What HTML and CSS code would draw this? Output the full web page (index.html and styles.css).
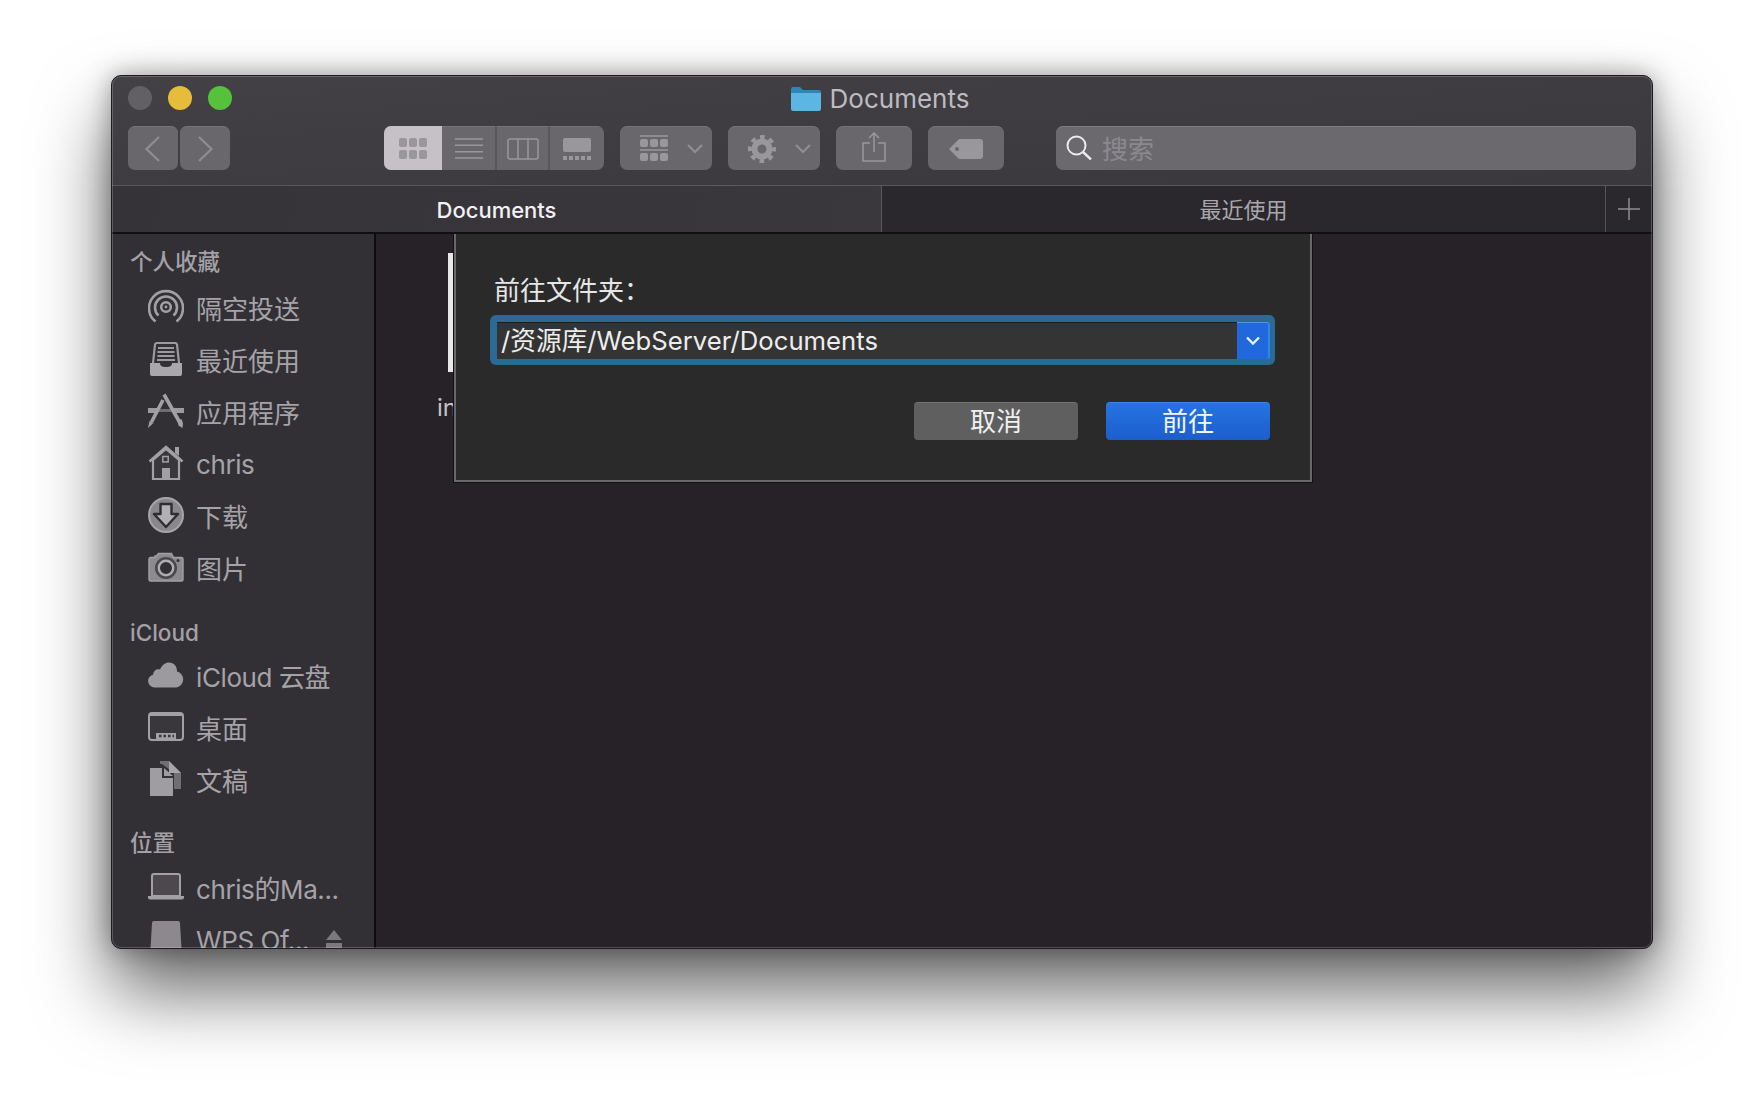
FILE: index.html

```html
<!DOCTYPE html>
<html lang="zh-CN">
<head>
  <meta charset="UTF-8">
  <title>Documents</title>
  <link rel="stylesheet" href="styles.css">
</head>
<body>
  <div class="window">
    <div class="chrome">
      <div class="titlebar">
        <div class="lights">
          <span class="light light-off"></span>
          <span class="light light-min"></span>
          <span class="light light-max"></span>
        </div>
        <div class="title">
          <svg class="folder" viewBox="0 0 30 24"><path fill="#2f86b5" d="M0 2a2 2 0 0 1 2-2h7l3 3h16a2 2 0 0 1 2 2v4H0z"/><path fill="#5cb6e2" d="M0 6h30v16a2 2 0 0 1-2 2H2a2 2 0 0 1-2-2z"/></svg>
          <span>Documents</span>
        </div>
      </div>

      <div class="toolbar">
        <div class="btn-pair">
          <div class="tool nav-btn"><svg width="20" height="30" viewBox="0 0 20 30"><path class="ico-line" d="M16 3 3.500 15 16 27"/></svg></div>
          <div class="tool nav-btn"><svg width="20" height="30" viewBox="0 0 20 30"><path class="ico-line" d="M4 3l12.500 12L4 27"/></svg></div>
        </div>

        <div class="view-group">
          <div class="view-btn view-active">
            <svg width="28" height="21" viewBox="0 0 28 21"><g fill="#9a979c"><rect width="8" height="9" rx="2"/><rect x="10" width="8" height="9" rx="2"/><rect x="20" width="8" height="9" rx="2"/><rect y="12" width="8" height="9" rx="2"/><rect x="10" y="12" width="8" height="9" rx="2"/><rect x="20" y="12" width="8" height="9" rx="2"/></g></svg>
          </div>
          <div class="view-btn view-list">
            <svg width="28" height="21" viewBox="0 0 28 21"><path stroke="#9a979c" stroke-width="1.600" d="M0 1h28M0 7.300h28M0 13.700h28M0 20h28"/></svg>
          </div>
          <div class="view-btn view-cols">
            <svg width="32" height="22" viewBox="0 0 32 22"><rect x="1" y="1" width="30" height="20" rx="2" fill="none" stroke="#9a979c" stroke-width="1.500"/><path stroke="#9a979c" stroke-width="1.500" d="M11 1v20M21 1v20"/></svg>
          </div>
          <div class="view-btn view-gallery">
            <svg width="28" height="22" viewBox="0 0 28 22"><rect width="28" height="14" rx="2" fill="#9a979c"/><g fill="#9a979c"><rect y="18" width="4" height="4"/><rect x="6" y="18" width="4" height="4"/><rect x="12" y="18" width="4" height="4"/><rect x="18" y="18" width="4" height="4"/><rect x="24" y="18" width="4" height="4"/></g></svg>
          </div>
        </div>

        <div class="tool menu-btn arrange">
          <svg width="28" height="27" viewBox="0 0 28 27"><path stroke="#9a979c" stroke-width="1.500" d="M0 1h28M0 15h28"/><g fill="#9a979c"><rect y="4" width="8" height="8" rx="2"/><rect x="10" y="4" width="8" height="8" rx="2"/><rect x="20" y="4" width="8" height="8" rx="2"/><rect y="18" width="8" height="8" rx="2"/><rect x="10" y="18" width="8" height="8" rx="2"/><rect x="20" y="18" width="8" height="8" rx="2"/></g></svg>
          <svg class="chev" width="16" height="10" viewBox="0 0 16 10"><path class="ico-line" d="M1 1l7 7 7-7"/></svg>
        </div>

        <div class="tool menu-btn action">
          <svg width="28" height="28" viewBox="0 0 28 28"><g fill="none" stroke="#9a979c"><circle cx="14" cy="14" r="7.500" stroke-width="6"/><circle cx="14" cy="14" r="12" stroke-width="4" stroke-dasharray="4.712 4.712" stroke-dashoffset="2.356"/></g></svg>
          <svg class="chev" width="16" height="10" viewBox="0 0 16 10"><path class="ico-line" d="M1 1l7 7 7-7"/></svg>
        </div>

        <div class="tool icon-btn share">
          <svg width="24" height="30" viewBox="0 0 24 30"><path fill="none" stroke="#9a979c" stroke-width="1.500" d="M8 11H1v18h22V11h-7"/><path fill="none" stroke="#9a979c" stroke-width="1.500" d="M12 20V1.500M7 6l5-5 5 5"/></svg>
        </div>

        <div class="tool icon-btn tag">
          <svg width="34" height="20" viewBox="0 0 34 20"><path fill="#9a979c" fill-rule="evenodd" d="M10 0h21a3 3 0 0 1 3 3v14a3 3 0 0 1-3 3H10L0 10zM8 8a2 2 0 1 0 0 4 2 2 0 0 0 0-4z"/></svg>
        </div>

        <div class="search">
          <svg width="26" height="25" viewBox="0 0 26 25"><circle cx="10.500" cy="10.500" r="9" fill="none" stroke="#eceaee" stroke-width="2"/><path stroke="#eceaee" stroke-width="2.400" d="M17 17l8 7.500"/></svg>
          <span>搜索</span>
        </div>
      </div>
    </div>

    <div class="tabs">
      <div class="tab tab-active">Documents</div>
      <div class="tab">最近使用</div>
      <div class="tab-add"><svg width="22" height="22" viewBox="0 0 22 22"><path stroke="#8f8d92" stroke-width="1.500" d="M11 0v22M0 11h22"/></svg></div>
    </div>

    <div class="main">
      <aside class="sidebar">
        <div class="side-title first">个人收藏</div>
        <div class="side-item">
          <svg class="side-ico" viewBox="0 0 36 36"><g fill="none" stroke="#a3a0a5" stroke-width="2.600"><path d="M7.500 32.500A17 17 0 1 1 28.500 32.500"/><path d="M10.500 26.500A11 11 0 1 1 25.500 26.500"/><circle cx="18" cy="18" r="4.800"/></g><circle cx="18" cy="18" r="1.400" fill="#a3a0a5"/></svg>
          <span>隔空投送</span>
        </div>
        <div class="side-item">
          <svg class="side-ico" viewBox="0 0 36 36"><path fill="none" stroke="#9d9a9f" stroke-width="2.200" d="M5 22 7 3.500a2 2 0 0 1 2-1.500h18a2 2 0 0 1 2 1.500L31 22"/><path stroke="#9d9a9f" stroke-width="2" d="M10 7h16M9.500 11h17M9.500 15h17M9 19h18"/><path fill="#aaa7ac" d="M2 22h10c0 3 2 4 6 4s6-1 6-4h10v11a2 2 0 0 1-2 2H4a2 2 0 0 1-2-2z"/></svg>
          <span>最近使用</span>
        </div>
        <div class="side-item">
          <svg class="side-ico" viewBox="0 0 36 36"><path fill="#9d9a9f" d="M0 15h11l-2.500 5H0zM24.500 15H36v5h-9z"/><path fill="#6f6c71" d="M12 16h11l1.500 3h-14z"/><path fill="none" stroke="#a3a0a5" stroke-width="3.600" d="M15 7 3.500 29M16 1.500 31.500 29"/><path fill="#a3a0a5" d="M1.500 28l4 2-5.500 5zM29.500 28l4-2 1.500 4.500-.500 4.500-4-2.500z"/></svg>
          <span>应用程序</span>
        </div>
        <div class="side-item side-latin side-low">
          <svg class="side-ico" viewBox="0 0 36 36"><path fill="none" stroke="#a3a0a5" stroke-width="2.600" d="M1.500 16.500 18 2l16.500 14.500"/><path fill="#a3a0a5" d="M27 2h4v9l-4-3z"/><path fill="#3a373c" stroke="#a3a0a5" stroke-width="2.200" d="M5 15v19h26V15L18 4z"/><rect x="14.800" y="11.500" width="5.400" height="5.400" fill="none" stroke="#a3a0a5" stroke-width="1.500"/><path fill="#a3a0a5" d="M14 23h8v11h-8z"/></svg>
          <span>chris</span>
        </div>
        <div class="side-item">
          <svg class="side-ico" viewBox="0 0 36 36"><circle cx="18" cy="18" r="17" fill="#8a878c" stroke="#a8a5aa" stroke-width="2"/><path fill="#b3b0b5" stroke="#2f2d32" stroke-width="2.400" stroke-linejoin="round" d="M12.500 7h11v10H30L18 30 6 17h6.500z"/></svg>
          <span>下载</span>
        </div>
        <div class="side-item">
          <svg class="side-ico" viewBox="0 0 36 36"><path fill="#8d8a8f" stroke="#a3a0a5" stroke-width="1.400" d="M1 10a1.500 1.500 0 0 1 1.500-1.500H7V7h1.500l2-2.500h13l2 4H33.500A1.500 1.500 0 0 1 35 10v20.500a1.500 1.500 0 0 1-1.500 1.500h-31A1.500 1.500 0 0 1 1 30.500z"/><circle cx="18" cy="19" r="11" fill="#4a474c"/><circle cx="18" cy="19" r="7.200" fill="#323035" stroke="#b0adb2" stroke-width="2.400"/><circle cx="30" cy="11.500" r="1.500" fill="#323035"/></svg>
          <span>图片</span>
        </div>

        <div class="side-title title-low">iCloud</div>
        <div class="side-item side-latin">
          <svg class="side-ico" viewBox="0 0 36 36"><path fill="#9d9a9f" d="M6.500 30.500a6.500 6.500 0 0 1-1.500-12.800C5.500 13.500 8.500 11.500 12 12.500 14 8 17.500 5.500 21 5.500c5 0 8.200 4 8 9A8.200 8.200 0 0 1 28.500 30.500z"/></svg>
          <span>iCloud 云盘</span>
        </div>
        <div class="side-item">
          <svg class="side-ico" viewBox="0 0 36 36"><rect x="1" y="4" width="34" height="27" rx="3" fill="#3a373c" stroke="#a3a0a5" stroke-width="2"/><path fill="#a3a0a5" d="M2 4h32v3H2z"/><rect x="8" y="24" width="20" height="6" fill="#a3a0a5"/><path stroke="#3a373c" stroke-width="2.500" stroke-dasharray="2.500 2" d="M11 27h15"/></svg>
          <span>桌面</span>
        </div>
        <div class="side-item">
          <svg class="side-ico" viewBox="0 0 36 36"><path fill="#716e73" d="M12 0h9l12 12v16h-7V12L14 3H12z"/><path fill="#a8a5aa" d="M21 0l12 12H21z"/><path fill="#a09da2" d="M2 7h12v10h11v18H2z"/><path fill="#a09da2" d="M16 7l9 8h-9z"/></svg>
          <span>文稿</span>
        </div>

        <div class="side-title">位置</div>
        <div class="side-item side-latin">
          <svg class="side-ico" viewBox="0 0 36 36"><path fill="#4c484e" stroke="#a3a0a5" stroke-width="2" d="M4 27V7a2 2 0 0 1 2-2h24a2 2 0 0 1 2 2v20z"/><path fill="#a3a0a5" d="M0 27h36v1.500a2 2 0 0 1-2 2H2a2 2 0 0 1-2-2z"/></svg>
          <span>chris的Ma...</span>
        </div>
        <div class="side-item side-latin side-low">
          <svg class="side-ico" viewBox="0 0 36 36"><path fill="#8c888e" d="M6 0h24a2 2 0 0 1 2 2l2 34H2L4 2a2 2 0 0 1 2-2z"/></svg>
          <span class="side-name">WPS Of...</span>
          <svg class="eject" width="16" height="18" viewBox="0 0 16 18"><path fill="#7c797e" d="M8 0l8 10H0zM0 13h16v5H0z"/></svg>
        </div>
      </aside>

      <section class="content">
        <div class="file">
          <div class="file-page"></div>
          <div class="file-name">index.html</div>
        </div>

        <div class="sheet">
          <div class="sheet-label">前往文件夹：</div>
          <div class="combo">
            <div class="combo-field">/资源库/WebServer/Documents</div>
            <div class="combo-arrow"><svg width="14" height="10" viewBox="0 0 14 10"><path fill="none" stroke="#e8f0fc" stroke-width="2.400" d="M1 1.500l6 6 6-6"/></svg></div>
          </div>
          <div class="sheet-actions">
            <div class="sheet-btn btn-cancel">取消</div>
            <div class="sheet-btn btn-go">前往</div>
          </div>
        </div>
      </section>
    </div>
  </div>
</body>
</html>
```

FILE: styles.css

```css
* {
  box-sizing: border-box;
}

html, body {
  height: 100%;
}

body {
  margin: 0;
  padding: 75px 0 0 111px;
  background-color: #fff;
  overflow: hidden;
  font-family: "Inter", "Noto Sans CJK SC", sans-serif;
}

.window {
  position: relative;
  width: 1542px;
  height: 874px;
  display: flex;
  flex-direction: column;
  border: 1px solid #1c1b1d;
  border-radius: 10px;
  overflow: hidden;
  background: #3a383c;
  box-shadow: 0 42px 75px rgba(0, 0, 0, 0.6), 0 0 26px rgba(0, 0, 0, 0.35);
}

/* light inner rim, sits over everything */
.window::after {
  content: "";
  position: absolute;
  inset: 0;
  border: 1px solid rgba(255, 255, 255, 0.2);
  border-radius: 9px;
  pointer-events: none;
}

.chrome {
  flex: none;
  background: linear-gradient(176deg, #434046, #3a383c);
}

.titlebar {
  height: 50px;
  display: grid;
  grid-template-columns: 1fr auto 1fr;
  align-items: start;
  padding: 10px 16px 0;
}

.lights {
  display: flex;
  gap: 16px;
}

.light {
  width: 24px;
  height: 24px;
  border-radius: 50%;
}

.light-off { background-color: #626064; }
.light-min { background-color: #e6bd3a; }
.light-max { background-color: #56c13a; }

.title {
  display: flex;
  align-items: center;
  gap: 9px;
  color: #bdbbc0;
  font-size: 26px;
  line-height: 26px;
  margin-right: 4px;
}

.folder {
  width: 30px;
  height: 24px;
}

.toolbar {
  height: 60px;
  display: flex;
  align-items: flex-start;
  padding: 0 16px;
  border-bottom: 1px solid #59575c;
}

.btn-pair {
  display: flex;
  gap: 2px;
}

.tool {
  height: 44px;
  display: flex;
  align-items: center;
  justify-content: center;
  background-color: #69676c;
  border-top: 1px solid #757378;
  border-radius: 7px;
}

.nav-btn {
  width: 50px;
}

.ico-line {
  fill: none;
  stroke: #8f8d92;
  stroke-width: 2.200;
}

.view-group {
  margin-left: 154px;
  width: 220px;
  height: 44px;
  display: flex;
  border-radius: 7px;
  overflow: hidden;
  background-color: #69676c;
}

.view-btn {
  display: flex;
  align-items: center;
  justify-content: center;
}

.view-active {
  width: 58px;
  background-color: #c5c1c6;
}

.view-list,
.view-cols,
.view-gallery {
  border-top: 1px solid #757378;
}

.view-list {
  width: 53px;
}

.view-cols {
  width: 55px;
  border-left: 2px solid #58565a;
  border-right: 2px solid #58565a;
}

.view-gallery {
  width: 54px;
}

.menu-btn {
  justify-content: flex-start;
  gap: 19px;
  width: 92px;
  padding-left: 20px;
}

.arrange {
  margin-left: 16px;
}

.action {
  margin-left: 16px;
}

.icon-btn {
  width: 76px;
  margin-left: 16px;
}

.share svg {
  margin-top: -3px;
}

.search {
  flex: 1;
  height: 44px;
  margin-left: 52px;
  padding: 0 0 2px 10px;
  display: flex;
  align-items: center;
  gap: 10px;
  background-color: #6b696e;
  border-top: 1px solid #807e83;
  border-radius: 7px;
  color: #8b898e;
  font-size: 26px;
}

.tabs {
  flex: none;
  height: 48px;
  display: flex;
  border-bottom: 2px solid #0f0e10;
  background-color: #2b282d;
}

.tab {
  width: 724px;
  display: flex;
  align-items: center;
  justify-content: center;
  padding-bottom: 2px;
  border-right: 1px solid #59575c;
  color: #a9a7ac;
  font-size: 22px;
}

.tab-active {
  width: 770px;
  padding: 2px 0 0;
  background: linear-gradient(100deg, #353337, #3b383d);
  color: #f2f1f3;
  font-weight: 500;
}

.tab-add {
  flex: 1;
  display: flex;
  align-items: center;
  justify-content: center;
}

.main {
  flex: 1;
  min-height: 0;
  display: flex;
}

.sidebar {
  flex: none;
  width: 264px;
  overflow: hidden;
  background-color: #323035;
  border-right: 2px solid #0c0b0d;
}

.side-title {
  height: 30px;
  margin: 23px 0 3px;
  padding-left: 18px;
  line-height: 30px;
  color: #a3a1a6;
  font-size: 22.500px;
  font-weight: 500;
}

.side-title.first {
  margin: 13px 0 4px;
}

.title-low {
  padding-top: 2px;
}

.side-item {
  height: 52px;
  display: flex;
  align-items: center;
  padding-left: 36px;
  color: #a5a3a8;
  font-size: 26px;
  white-space: nowrap;
}

.side-latin {
  letter-spacing: -0.400px;
}

.side-low span {
  padding-top: 2px;
}

.side-ico {
  flex: none;
  width: 36px;
  height: 36px;
  margin-right: 12px;
}

.eject {
  margin-left: 17px;
}

.content {
  position: relative;
  flex: 1;
  padding: 19px 0 0 72px;
  background-color: #262227;
}

.file-page {
  width: 5px;
  height: 119px;
  background-color: #e8e8e8;
}

.file-name {
  margin: 21px 0 0 -11px;
  color: #c5c3c8;
  font-size: 24px;
  white-space: nowrap;
}

/* the sheet hangs from the tab bar, over the files */
.sheet {
  position: absolute;
  top: 0;
  left: 78px;
  width: 858px;
  height: 248px;
  padding: 37px 36px 0 38px;
  background-color: #2a2a2a;
  border: 2px solid #69696b;
  border-top: 0;
  outline: 1px solid #111;
}

.sheet-label {
  height: 39px;
  line-height: 39px;
  color: #e6e6e6;
  font-size: 26px;
}

.combo {
  margin: 5px 0 0 -4px;
  width: 785px;
  height: 50px;
  display: flex;
  padding: 7px 5px 6px 7px;
  background-color: #2a6a95;
  border-radius: 6px;
}

.combo-field {
  flex: 1;
  padding-left: 4px;
  line-height: 35px;
  background-color: #343434;
  border-top: 1px solid #1d1d1d;
  color: #ededed;
  font-size: 25.700px;
}

.combo-arrow {
  width: 33px;
  display: flex;
  align-items: center;
  justify-content: center;
  background-color: #2168dc;
  border-top: 1px solid #5d8fe0;
  border-right: 2px solid #2f85ea;
  border-radius: 0 3px 3px 0;
}

.sheet-actions {
  display: flex;
  justify-content: flex-end;
  gap: 28px;
  margin-top: 37px;
  margin-right: 4px;
}

.sheet-btn {
  width: 164px;
  height: 38px;
  display: flex;
  align-items: center;
  justify-content: center;
  padding-bottom: 4px;
  border-radius: 4px;
  color: #f0f0f0;
  font-size: 26px;
}

.btn-cancel {
  background-color: #5f5f5f;
  border-top: 1px solid #757575;
}

.btn-go {
  background: linear-gradient(#2673e4, #1b5ecb);
  border-top: 1px solid #3c85ec;
  color: #f4f7fd;
}
```
